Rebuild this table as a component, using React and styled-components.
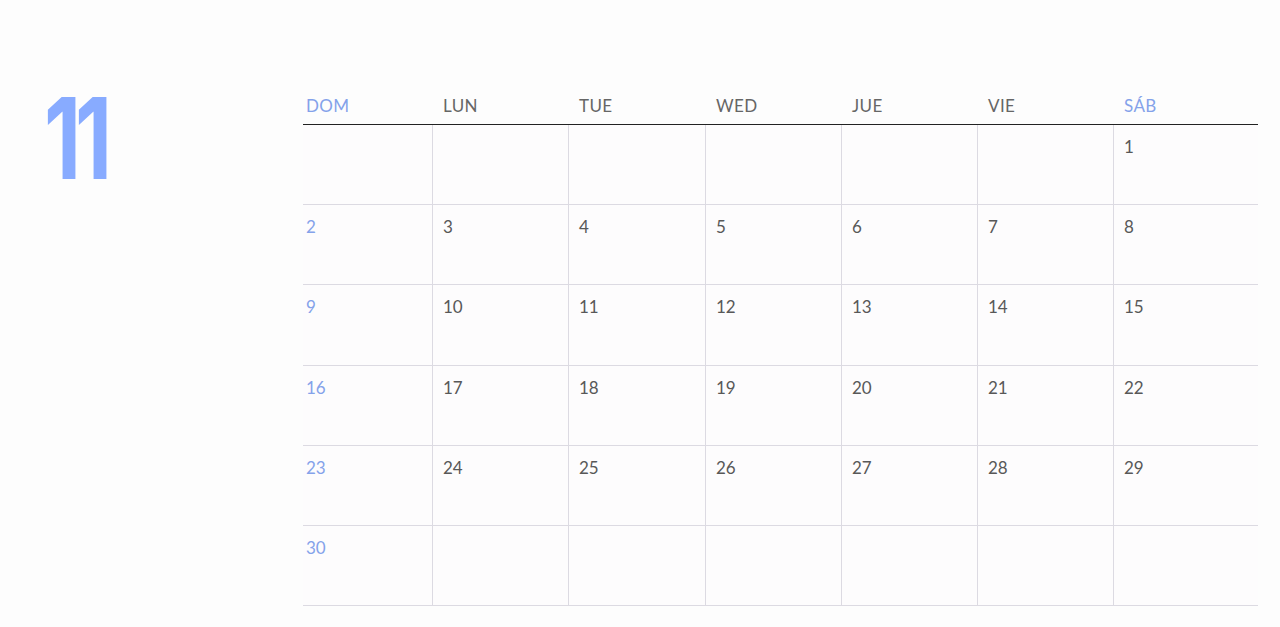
import React from "react";
import styled, { createGlobalStyle } from "styled-components";

const Global = createGlobalStyle`
  html, body { margin: 0; padding: 0; background: #fdfdfd; }
  body { font-family: Lato, "Open Sans", sans-serif; }
  * { box-sizing: border-box; }
`;

const Page = styled.div`
  display: flex;
  width: 1280px;
  height: 627px;
  background: #fdfdfd;
  overflow: hidden;
`;

const Side = styled.div`
  width: 303px;
  flex: none;
  padding: 82px 0 0 44px;
`;

const MonthNum = styled.div`
  display: inline-block;
  font-family: Inter, Roboto, sans-serif;
  font-weight: 700;
  font-size: 113px;
  line-height: 1;
  color: #88abff;
  letter-spacing: -8px;
  transform: scaleX(0.76);
  transform-origin: left top;
`;

const Calendar = styled.div`
  width: 955px;
  flex: none;
  padding-top: 85px;
`;

const COLS = "129px 136px 137px 136px 136px 136px 145px";

const HeadRow = styled.div`
  display: grid;
  grid-template-columns: ${COLS};
  height: 40px;
  border-bottom: 1px solid #222;
  align-items: end;
`;

const HeadCell = styled.div`
  padding: 0 0 8px ${(p) => (p.$first ? "3px" : "11px")};
  font-size: 17px;
  line-height: 20px;
  letter-spacing: 0.4px;
  color: ${(p) => (p.$weekend ? "#84a2ea" : "#666")};
`;

const Row = styled.div`
  display: grid;
  grid-template-columns: ${COLS};
  height: 80.2px;
  border-bottom: 1px solid #dcdae2;
`;

const Cell = styled.div`
  border-left: ${(p) => (p.$first ? "none" : "1px solid #dcdae2")};
  padding: 12px 0 0 ${(p) => (p.$first ? "3px" : "10px")};
  font-size: 17px;
  line-height: 20px;
  color: ${(p) => (p.$sunday ? "#84a2ea" : "#585858")};
  background: #fdfcfd;
`;

const days = [
  { label: "DOM", weekend: true },
  { label: "LUN" },
  { label: "TUE" },
  { label: "WED" },
  { label: "JUE" },
  { label: "VIE" },
  { label: "SÁB", weekend: true },
];

const weeks = [
  [null, null, null, null, null, null, 1],
  [2, 3, 4, 5, 6, 7, 8],
  [9, 10, 11, 12, 13, 14, 15],
  [16, 17, 18, 19, 20, 21, 22],
  [23, 24, 25, 26, 27, 28, 29],
  [30, null, null, null, null, null, null],
];

export default function App() {
  return (
    <>
      <Global />
      <Page>
        <Side>
          <MonthNum>11</MonthNum>
        </Side>
        <Calendar>
          <HeadRow>
            {days.map((d, i) => (
              <HeadCell key={d.label} $first={i === 0} $weekend={d.weekend}>
                {d.label}
              </HeadCell>
            ))}
          </HeadRow>
          {weeks.map((w, wi) => (
            <Row key={wi}>
              {w.map((n, i) => (
                <Cell key={i} $first={i === 0} $sunday={i === 0}>
                  {n ?? ""}
                </Cell>
              ))}
            </Row>
          ))}
        </Calendar>
      </Page>
    </>
  );
}
